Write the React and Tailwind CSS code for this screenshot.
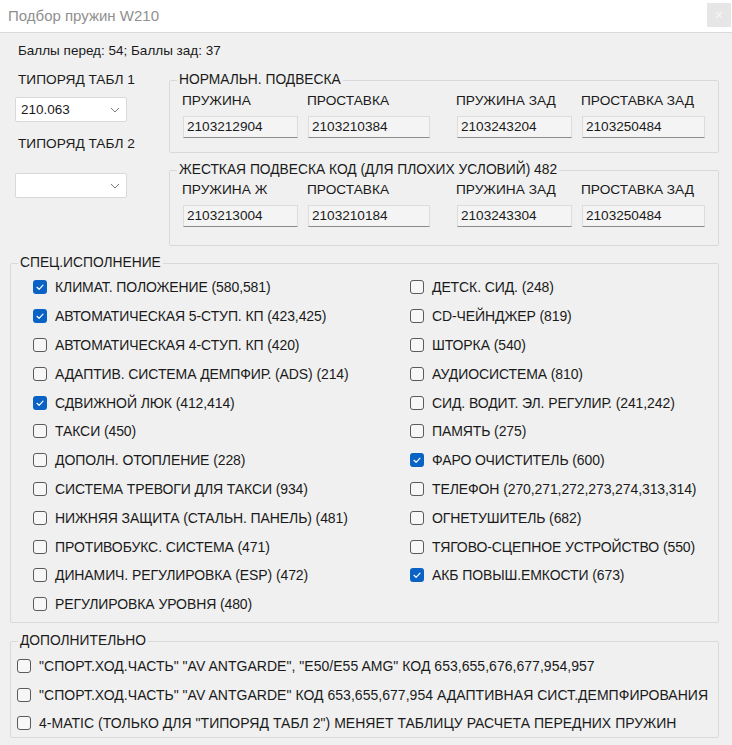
import React from "react";

const FONT = { fontFamily: '"Liberation Sans", Arial, sans-serif' };

const specLeft = [
  ["КЛИМАТ. ПОЛОЖЕНИЕ (580,581)", true],
  ["АВТОМАТИЧЕСКАЯ 5-СТУП. КП (423,425)", true],
  ["АВТОМАТИЧЕСКАЯ 4-СТУП. КП (420)", false],
  ["АДАПТИВ. СИСТЕМА ДЕМПФИР. (ADS) (214)", false],
  ["СДВИЖНОЙ ЛЮК (412,414)", true],
  ["ТАКСИ (450)", false],
  ["ДОПОЛН. ОТОПЛЕНИЕ (228)", false],
  ["СИСТЕМА ТРЕВОГИ ДЛЯ ТАКСИ (934)", false],
  ["НИЖНЯЯ ЗАЩИТА (СТАЛЬН. ПАНЕЛЬ) (481)", false],
  ["ПРОТИВОБУКС. СИСТЕМА (471)", false],
  ["ДИНАМИЧ. РЕГУЛИРОВКА (ESP) (472)", false],
  ["РЕГУЛИРОВКА УРОВНЯ (480)", false],
];

const specRight = [
  ["ДЕТСК. СИД. (248)", false],
  ["CD-ЧЕЙНДЖЕР (819)", false],
  ["ШТОРКА (540)", false],
  ["АУДИОСИСТЕМА (810)", false],
  ["СИД. ВОДИТ. ЭЛ. РЕГУЛИР. (241,242)", false],
  ["ПАМЯТЬ (275)", false],
  ["ФАРО ОЧИСТИТЕЛЬ (600)", true],
  ["ТЕЛЕФОН (270,271,272,273,274,313,314)", false],
  ["ОГНЕТУШИТЕЛЬ (682)", false],
  ["ТЯГОВО-СЦЕПНОЕ УСТРОЙСТВО (550)", false],
  ["АКБ ПОВЫШ.ЕМКОСТИ (673)", true],
];

const extra = [
  '"СПОРТ.ХОД.ЧАСТЬ" "AV ANTGARDE", "E50/E55 AMG" КОД 653,655,676,677,954,957',
  '"СПОРТ.ХОД.ЧАСТЬ" "AV ANTGARDE" КОД 653,655,677,954 АДАПТИВНАЯ СИСТ.ДЕМПФИРОВАНИЯ',
  '4-MATIC (ТОЛЬКО ДЛЯ "ТИПОРЯД ТАБЛ 2") МЕНЯЕТ ТАБЛИЦУ РАСЧЕТА ПЕРЕДНИХ ПРУЖИН',
];

function Check({ checked }) {
  if (checked) {
    return (
      <span className="flex h-[14px] w-[14px] shrink-0 items-center justify-center rounded-[3px] bg-[#0a62c4]">
        <svg width="14" height="14" viewBox="0 0 14 14">
          <path d="M4 7.3 L6.1 9.3 L10 5.1" fill="none" stroke="#ffffff" strokeWidth="1.2" strokeLinecap="round" strokeLinejoin="round" />
        </svg>
      </span>
    );
  }
  return <span className="h-[14px] w-[14px] shrink-0 rounded-[3px] border border-[#5a5a5a] bg-[#f7f7f7]" />;
}

function CheckRow({ label, checked, h = "h-[28.8px]", track = "tracking-[-0.1px]" }) {
  return (
    <div className={`flex items-center gap-[8px] ${h}`}>
      <Check checked={checked} />
      <span className={`whitespace-nowrap text-[14px] leading-[16px] text-[#1a1a1a] ${track}`}>{label}</span>
    </div>
  );
}

function Combo({ value }) {
  return (
    <div className="flex h-[25px] w-[112px] items-center justify-between rounded-[2px] border border-[#d9d9d9] bg-white pl-[5px] pr-[6px]">
      <span className="text-[13.5px] leading-[16px] text-[#1a1a1a]">{value}</span>
      <svg width="10" height="6" viewBox="0 0 10 6">
        <path d="M1 1 L5 5 L9 1" fill="none" stroke="#7a7a7a" strokeWidth="1" />
      </svg>
    </div>
  );
}

function Field({ label, value, w, ml }) {
  return (
    <div className={`flex flex-col ${ml}`} style={{ width: w }}>
      <span className="-ml-px whitespace-nowrap text-[13.7px] leading-[16px] text-[#1a1a1a]">{label}</span>
      <div className="mt-[7px] flex h-[22px] items-center border border-[#dcdcdc] border-b-[#8c8c8c] bg-[#f4f4f4] pl-[3px]">
        <span className="text-[13.6px] leading-[16px] text-[#1a1a1a]">{value}</span>
      </div>
    </div>
  );
}

function FieldRow({ items }) {
  return (
    <div className="flex pl-[13px]">
      <Field label={items[0][0]} value={items[0][1]} w={115} ml="" />
      <Field label={items[1][0]} value={items[1][1]} w={122} ml="ml-[10px]" />
      <Field label={items[2][0]} value={items[2][1]} w={115} ml="ml-[27px]" />
      <Field label={items[3][0]} value={items[3][1]} w={123} ml="ml-[10px]" />
    </div>
  );
}

function Group({ title, className, children }) {
  return (
    <fieldset className={`rounded-[2px] border border-[#d9d9d9] ${className}`}>
      <legend className="ml-[7px] whitespace-nowrap px-[2px] text-[13.8px] leading-[16px] text-[#1a1a1a]">{title}</legend>
      {children}
    </fieldset>
  );
}

export default function App() {
  return (
    <div className="flex h-[745px] w-[732px] flex-col overflow-hidden bg-[#f0f0f0]" style={FONT}>
      {/* title bar */}
      <div className="flex h-[33px] shrink-0 items-start justify-between border-b border-[#dadada] bg-white">
        <span className="ml-[8px] mt-[7px] text-[15px] leading-[18px] text-[#8f8f8f]">Подбор пружин W210</span>
        <div className="mr-[1px] mt-[3px] flex h-[24px] w-[24px] items-center justify-center bg-[#e6e6e6] text-[14px] text-[#f6f6f6]">×</div>
      </div>

      <div className="ml-[18px] mt-[10px] text-[13.5px] leading-[16px] text-[#1a1a1a]">Баллы перед: 54; Баллы зад: 37</div>

      <div className="mt-[13px] flex">
        {/* series selectors */}
        <div className="ml-[15px] flex w-[112px] flex-col">
          <span className="whitespace-nowrap pl-[3px] text-[13.7px] leading-[16px] text-[#1a1a1a]">ТИПОРЯД ТАБЛ 1</span>
          <div className="mt-[9px]">
            <Combo value="210.063" />
          </div>
          <span className="mt-[14px] whitespace-nowrap pl-[3px] text-[13.7px] leading-[16px] text-[#1a1a1a]">ТИПОРЯД ТАБЛ 2</span>
          <div className="mt-[21px]">
            <Combo value="" />
          </div>
        </div>

        {/* suspension groups */}
        <div className="ml-[42px] flex w-[550px] flex-col">
          <Group title="НОРМАЛЬН. ПОДВЕСКА" className="h-[81px]">
            <div className="mt-[5px]">
              <FieldRow
                items={[
                  ["ПРУЖИНА", "2103212904"],
                  ["ПРОСТАВКА", "2103210384"],
                  ["ПРУЖИНА ЗАД", "2103243204"],
                  ["ПРОСТАВКА ЗАД", "2103250484"],
                ]}
              />
            </div>
          </Group>
          <Group title="ЖЕСТКАЯ ПОДВЕСКА КОД (ДЛЯ ПЛОХИХ УСЛОВИЙ) 482" className="mt-[9px] h-[84px]">
            <div className="mt-[4px]">
              <FieldRow
                items={[
                  ["ПРУЖИНА Ж", "2103213004"],
                  ["ПРОСТАВКА", "2103210184"],
                  ["ПРУЖИНА ЗАД", "2103243304"],
                  ["ПРОСТАВКА ЗАД", "2103250484"],
                ]}
              />
            </div>
          </Group>
        </div>
      </div>

      <Group title="СПЕЦ.ИСПОЛНЕНИЕ" className="ml-[10px] mt-[9px] h-[368px] w-[709px]">
        <div className="mt-[2px] grid grid-cols-[377px_1fr] pl-[22px]">
          <div className="flex flex-col">
            {specLeft.map(([l, c]) => (
              <CheckRow key={l} label={l} checked={c} />
            ))}
          </div>
          <div className="flex flex-col">
            {specRight.map(([l, c]) => (
              <CheckRow key={l} label={l} checked={c} />
            ))}
          </div>
        </div>
      </Group>

      <Group title="ДОПОЛНИТЕЛЬНО" className="ml-[10px] mt-[10px] h-[105px] w-[709px]">
        <div className="mt-[3px] flex flex-col pl-[6px]">
          {extra.map((l) => (
            <CheckRow key={l} label={l} checked={false} h="h-[28.5px]" track="tracking-[0.03px]" />
          ))}
        </div>
      </Group>
    </div>
  );
}
